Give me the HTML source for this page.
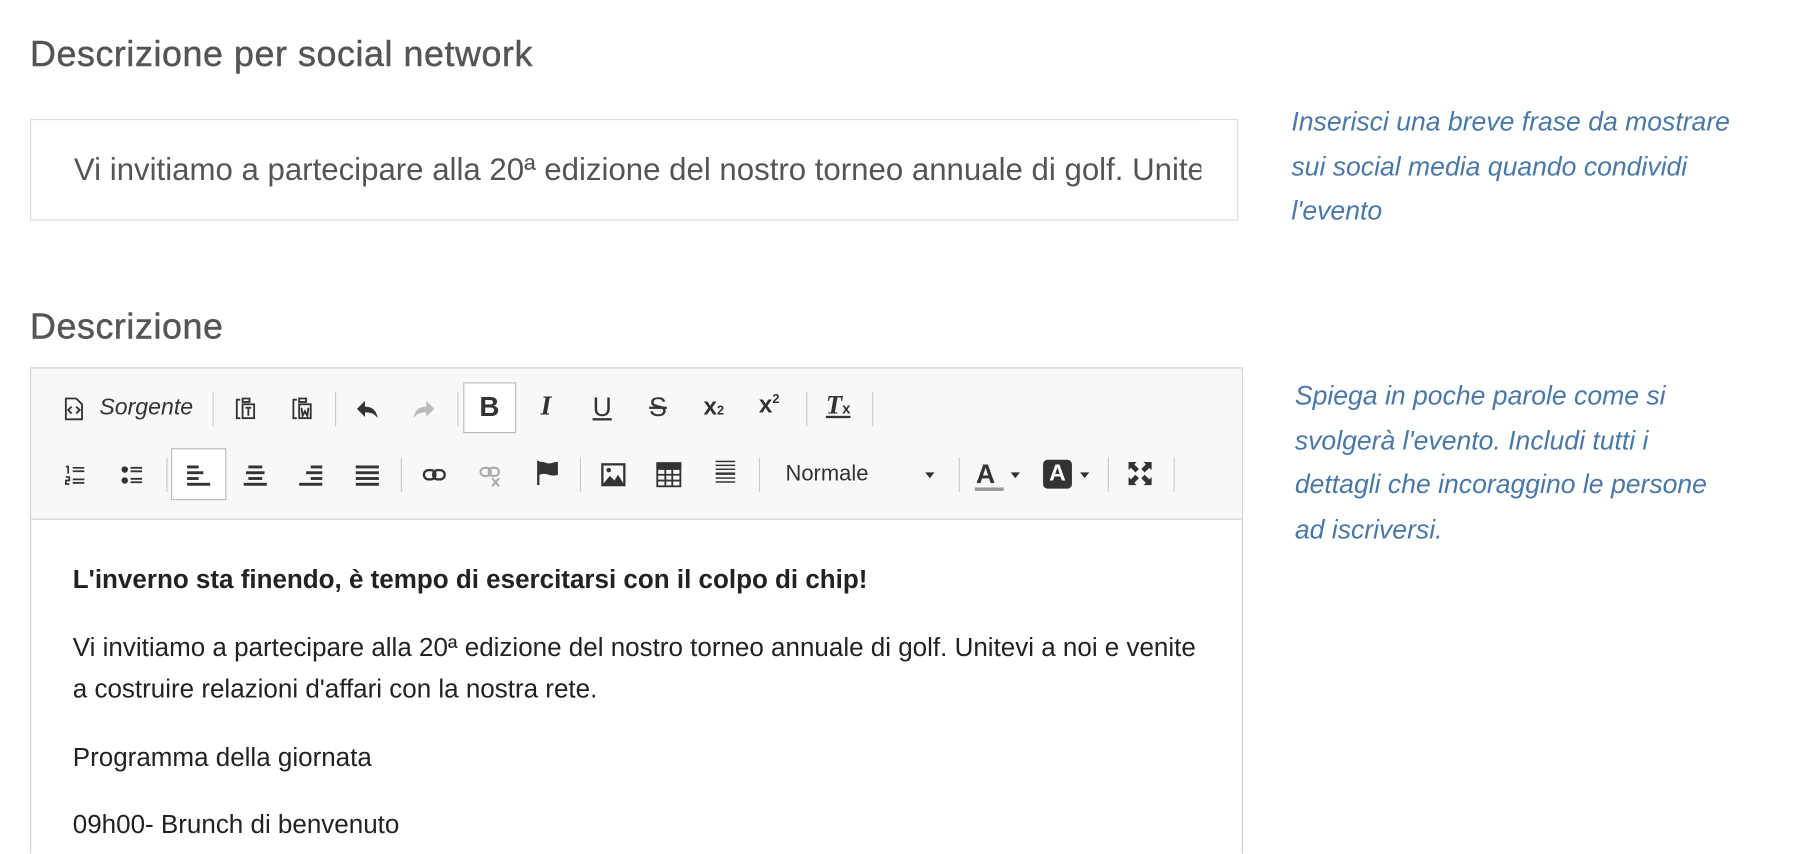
<!DOCTYPE html>
<html><head><meta charset="utf-8"><style>
html,body{margin:0;padding:0;background:#fff;width:1802px;height:841px;overflow:hidden}
#w{position:absolute;left:0;top:0;width:1560px;height:728px;transform:scale(1.1551);transform-origin:0 0;font-family:"Liberation Sans",sans-serif}
.a{position:absolute;white-space:nowrap}
h2{position:absolute;margin:0;font-weight:normal;color:#555;font-size:31px;left:26px;letter-spacing:0.5px;-webkit-text-stroke:0.4px #555}
.help{position:absolute;color:#4a78a6;font-style:italic;font-size:23px;line-height:38.5px}
.inp{position:absolute;left:26px;top:103px;width:1044px;height:86px;border:1px solid #d3dbe6;overflow:hidden}
.ed{position:absolute;left:26px;top:318px;width:1048px;height:420px;border:1px solid #d1d1d1;border-bottom:none}
.tb{position:absolute;left:0;top:0;width:1048px;height:130px;background:#f8f8f8;border-bottom:1px solid #d1d1d1}
.sep{position:absolute;width:1px;height:30px;background:#ccc}
.ic{position:absolute;width:22px;height:22px}
.txt{position:absolute;left:36px;color:#222;font-size:22.5px}
</style></head><body><div id="w">
<h2 style="top:29px">Descrizione per social network</h2>
<div class="inp"><div class="a" style="left:37px;top:28px;font-size:27px;color:#555">Vi invitiamo a partecipare alla 20ª edizione del nostro torneo annuale di golf. Unitevi a noi e venite</div></div>
<div class="a" style="left:1040px;top:104px;width:30px;height:84px;background:#fff"></div>
<div class="help" style="left:1118px;top:86px">Inserisci una breve frase da mostrare<br>sui social media quando condividi<br>l'evento</div>
<h2 style="top:265px">Descrizione</h2>
<div class="help" style="left:1121px;top:323px">Spiega in poche parole come si<br>svolgerà l'evento. Includi tutti i<br>dettagli che incoraggino le persone<br>ad iscriversi.</div>
<div class="ed">
<div class="tb">
<svg class="ic" style="left:26px;top:24px" viewBox="0 0 22 22" fill="none" stroke="#333" stroke-width="1.6"><path d="M4 2h9l5 5v13H4z"/><path d="M9 9l-3 3 3 3M13 9l3 3-3 3"/></svg>
<div class="a" style="left:59px;top:23px;font-size:20px;font-style:italic;color:#333">Sorgente</div>
<div class="sep" style="left:157px;top:20px"></div>
<svg class="ic" style="left:175px;top:23px" viewBox="0 0 22 22" fill="none" stroke="#333" stroke-width="1.6"><path d="M6 4H3v16h3M8 3h6v3H8z"/><rect x="8" y="8" width="10" height="12"/><path d="M10.5 11h5M13 11v7"/></svg>
<svg class="ic" style="left:224px;top:23px" viewBox="0 0 22 22" fill="none" stroke="#333" stroke-width="1.6"><path d="M6 4H3v16h3M8 3h6v3H8z"/><rect x="8" y="8" width="10" height="12"/><path d="M10 11l1 7 2-4 2 4 1-7"/></svg>
<div class="sep" style="left:263px;top:20px"></div>
<svg class="ic" style="left:280px;top:24px" viewBox="0 0 22 22"><path d="M9 4L2 11l7 7v-4c5 0 8 1 11 5-1-6-4-10-11-10z" fill="#333"/></svg>
<svg class="ic" style="left:329px;top:24px" viewBox="0 0 22 22"><path d="M13 4l7 7-7 7v-4c-5 0-8 1-11 5 1-6 4-10 11-10z" fill="#bbb"/></svg>
<div class="sep" style="left:369px;top:20px"></div>
<div class="a" style="left:374px;top:12px;width:46px;height:44px;border:1px solid #bcbcbc;background:#fff;box-sizing:border-box"></div>
<div class="a" style="left:388px;top:20px;font-size:24px;font-weight:bold;color:#333">B</div>
<div class="a" style="left:441px;top:20px;font-size:24px;font-style:italic;font-family:'Liberation Serif',serif;font-weight:bold;color:#333">I</div>
<div class="a" style="left:486px;top:20px;font-size:23px;text-decoration:underline;color:#333">U</div>
<div class="a" style="left:535px;top:20px;font-size:23px;text-decoration:line-through;color:#333">S</div>
<div class="a" style="left:582px;top:22px;font-size:21px;font-weight:bold;color:#333">x<span style="font-size:11px">2</span></div>
<div class="a" style="left:630px;top:20px;font-size:21px;font-weight:bold;color:#333">x<sup style="font-size:11px">2</sup></div>
<div class="sep" style="left:671px;top:20px"></div>
<div class="a" style="left:688px;top:19px;font-size:23px;font-style:italic;font-weight:bold;font-family:'Liberation Serif',serif;color:#333;text-decoration:underline">T<span style="font-size:13px;font-style:normal;font-family:'Liberation Sans'">x</span></div>
<div class="sep" style="left:728px;top:20px"></div>
<svg class="ic" style="left:28px;top:81px" viewBox="0 0 22 22" fill="none" stroke="#333" stroke-width="1.5"><path d="M2 4h2v6M2 13h3v3H2v3h3M8 5h10M8 8h10M8 15h10M8 18h10"/></svg>
<svg class="ic" style="left:77px;top:81px" viewBox="0 0 22 22" fill="none" stroke="#333" stroke-width="1.6"><circle cx="4" cy="6.5" r="2" fill="#333"/><circle cx="4" cy="16" r="2" fill="#333"/><path d="M9 5h10M9 8h10M9 14.5h10M9 17.5h10"/></svg>
<div class="sep" style="left:117px;top:77px"></div>
<div class="a" style="left:121px;top:69px;width:48px;height:45px;border:1px solid #bcbcbc;background:#fff;box-sizing:border-box"></div>
<svg class="ic" style="left:134px;top:81px" viewBox="0 0 22 22" fill="#333"><rect x="1" y="3" width="10" height="2.5"/><rect x="1" y="8" width="14" height="2.5"/><rect x="1" y="13" width="10" height="2.5"/><rect x="1" y="18" width="20" height="2.5"/></svg>
<svg class="ic" style="left:183px;top:81px" viewBox="0 0 22 22" fill="#333"><rect x="5" y="3" width="12" height="2.5"/><rect x="3" y="8" width="16" height="2.5"/><rect x="5" y="13" width="12" height="2.5"/><rect x="1" y="18" width="20" height="2.5"/></svg>
<svg class="ic" style="left:231px;top:81px" viewBox="0 0 22 22" fill="#333"><rect x="11" y="3" width="10" height="2.5"/><rect x="7" y="8" width="14" height="2.5"/><rect x="11" y="13" width="10" height="2.5"/><rect x="1" y="18" width="20" height="2.5"/></svg>
<svg class="ic" style="left:280px;top:81px" viewBox="0 0 22 22" fill="#333"><rect x="1" y="3" width="20" height="2.5"/><rect x="1" y="8" width="20" height="2.5"/><rect x="1" y="13" width="20" height="2.5"/><rect x="1" y="18" width="20" height="2.5"/></svg>
<div class="sep" style="left:320px;top:77px"></div>
<svg class="ic" style="left:338px;top:81px" viewBox="0 0 22 22" fill="none" stroke="#333" stroke-width="2"><rect x="2" y="7" width="10" height="8" rx="4"/><rect x="10" y="7" width="10" height="8" rx="4"/></svg>
<svg class="ic" style="left:387px;top:81px" viewBox="0 0 22 22" fill="none" stroke="#aaa" stroke-width="1.8"><rect x="2" y="5" width="9" height="7" rx="3.5"/><rect x="9" y="5" width="9" height="7" rx="3.5"/><path d="M12 14l6 7M18 14l-6 7"/></svg>
<svg class="ic" style="left:436px;top:79px" viewBox="0 0 22 22" fill="#333"><rect x="2" y="1" width="2" height="21"/><path d="M4 2c4-1 6 2 10 1s4-1 6-1v11c-3 1-5 1-8 0s-5-1-8 0z"/></svg>
<div class="sep" style="left:475px;top:77px"></div>
<svg class="ic" style="left:493px;top:81px" viewBox="0 0 22 22"><rect x="1.5" y="2" width="19" height="18" fill="none" stroke="#333" stroke-width="2"/><circle cx="7" cy="7" r="2" fill="#333"/><path d="M2 19l6-7 4 4 3-5 5 8z" fill="#333"/></svg>
<svg class="ic" style="left:541px;top:81px" viewBox="0 0 22 22" fill="none" stroke="#333" stroke-width="1.6"><rect x="1" y="1" width="20" height="20"/><rect x="1" y="1" width="20" height="5" fill="#333"/><path d="M1 11h20M1 16h20M8 6v15M14 6v15"/></svg>
<svg class="ic" style="left:590px;top:79px" viewBox="0 0 22 26" fill="#333"><rect x="1" y="1" width="20" height="1.5"/><rect x="1" y="5" width="20" height="1.5"/><rect x="1" y="9" width="20" height="1.5"/><rect x="1" y="13" width="20" height="2.5"/><rect x="1" y="18" width="20" height="1.5"/><rect x="1" y="22" width="20" height="1.5"/></svg>
<div class="sep" style="left:630px;top:77px"></div>
<div class="a" style="left:653px;top:81px;font-size:19px;color:#333">Normale</div>
<div class="a" style="left:774px;top:90px;width:0;height:0;border-left:4px solid transparent;border-right:4px solid transparent;border-top:5px solid #333"></div>
<div class="sep" style="left:803px;top:77px"></div>
<div class="a" style="left:818px;top:78px;font-size:23px;font-weight:bold;color:#333">A</div>
<div class="a" style="left:817px;top:103px;width:25px;height:3px;background:#999"></div>
<div class="a" style="left:848px;top:90px;border-left:4px solid transparent;border-right:4px solid transparent;border-top:5px solid #333"></div>
<div class="a" style="left:876px;top:79px;width:25px;height:25px;background:#333;border-radius:4px;color:#fff;font-weight:bold;font-size:20px;text-align:center;line-height:25px">A</div>
<div class="a" style="left:908px;top:90px;border-left:4px solid transparent;border-right:4px solid transparent;border-top:5px solid #333"></div>
<div class="sep" style="left:932px;top:77px"></div>
<svg class="ic" style="left:949px;top:80px" viewBox="0 0 22 22" fill="#333"><path d="M1 1h7L6 3l4 4-3 3-4-4-2 2zM21 1v7l-2-2-4 4-3-3 4-4-2-2zM1 21v-7l2 2 4-4 3 3-4 4 2 2zM21 21h-7l2-2-4-4 3-3 4 4 2-2z"/></svg>
<div class="sep" style="left:989px;top:77px"></div>
</div>
<div class="txt" style="top:170px;font-weight:bold">L'inverno sta finendo, è tempo di esercitarsi con il colpo di chip!</div>
<div class="txt" style="top:224px;line-height:36px">Vi invitiamo a partecipare alla 20ª edizione del nostro torneo annuale di golf. Unitevi a noi e venite<br>a costruire relazioni d'affari con la nostra rete.</div>
<div class="txt" style="top:324px">Programma della giornata</div>
<div class="txt" style="top:382px">09h00- Brunch di benvenuto</div>
</div>
</div></body></html>
